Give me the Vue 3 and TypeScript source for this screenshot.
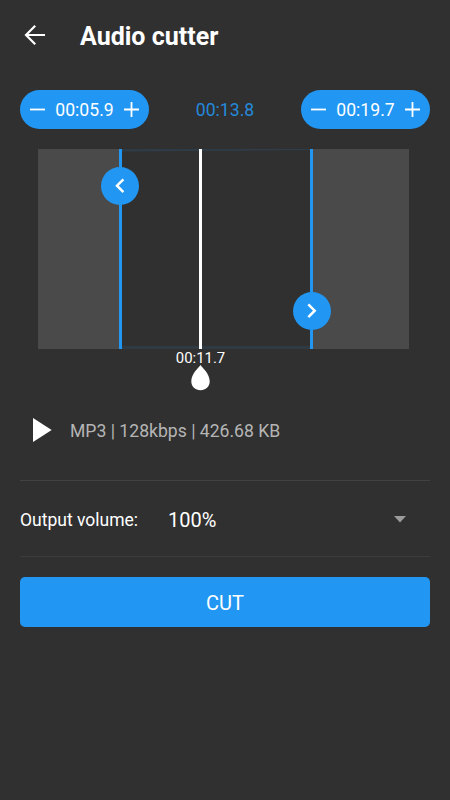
<script setup lang="ts">
import { computed, ref } from 'vue'

const start = ref(5.9)
const end = ref(19.7)
const position = ref(11.7)
const volume = ref('100%')

const format = (value: number): string => {
  const minutes = Math.floor(value / 60)
  const seconds = (value % 60).toFixed(1).padStart(4, '0')
  return `${String(minutes).padStart(2, '0')}:${seconds}`
}

const duration = computed(() => format(end.value - start.value))

const shift = (edge: 'start' | 'end', delta: number): void => {
  if (edge === 'start') start.value = Math.max(0, start.value + delta)
  else end.value = Math.max(start.value, end.value + delta)
}
</script>

<template>
  <main class="screen">
    <header class="toolbar">
      <button class="icon-button" aria-label="Back">
        <svg width="22" height="24" viewBox="0 0 22 24" fill="none" stroke="#fff" stroke-width="2.2">
          <path d="M21 11H2.600M11.200 1.700 2 11l9.200 9.300" />
        </svg>
      </button>
      <h1 class="title">Audio cutter</h1>
    </header>

    <section class="times">
      <div class="stepper">
        <button class="step" aria-label="Start earlier" @click="shift('start', -0.1)">
          <svg width="15" height="16" viewBox="0 0 15 16"><path d="M0 7.5h15" /></svg>
        </button>
        <span class="value">{{ format(start) }}</span>
        <button class="step" aria-label="Start later" @click="shift('start', 0.1)">
          <svg width="15" height="16" viewBox="0 0 15 16"><path d="M0 7.5h15M7.5 0v15" /></svg>
        </button>
      </div>
      <span class="duration">{{ duration }}</span>
      <div class="stepper">
        <button class="step" aria-label="End earlier" @click="shift('end', -0.1)">
          <svg width="15" height="16" viewBox="0 0 15 16"><path d="M0 7.5h15" /></svg>
        </button>
        <span class="value">{{ format(end) }}</span>
        <button class="step" aria-label="End later" @click="shift('end', 0.1)">
          <svg width="15" height="16" viewBox="0 0 15 16"><path d="M0 7.5h15M7.5 0v15" /></svg>
        </button>
      </div>
    </section>

    <section class="wave">
      <div class="outside"></div>
      <div class="selection">
        <svg class="trace" width="192" height="3" viewBox="0 0 192 3">
          <path d="M0 .3 192 0v1L0 2.400Z" fill="#2e3d49" />
        </svg>
      </div>
      <div class="outside"></div>
      <div class="edge edge-start">
        <span class="handle">
          <svg width="10" height="16" viewBox="0 0 10 16"><path d="M8.400 1.300 2 7.700l6.400 6.400" /></svg>
        </span>
      </div>
      <div class="edge edge-end">
        <span class="handle">
          <svg width="10" height="16" viewBox="0 0 10 16"><path d="m1.300 1.300 6.400 6.400-6.400 6.400" /></svg>
        </span>
      </div>
      <div class="playhead">
        <span class="needle"></span>
        <span class="position">{{ format(position) }}</span>
        <svg class="drop" width="19" height="26" viewBox="0 0 19 26">
          <path d="M9.500 0C7.500 3 .3 8.500.3 16.300c0 5.500 4 8.900 9.200 8.900s9.200-3.400 9.200-8.900C18.700 8.500 11.500 3 9.500 0Z" fill="#fff" />
        </svg>
      </div>
    </section>

    <section class="file">
      <button class="icon-button" aria-label="Play">
        <svg width="19" height="24" viewBox="0 0 19 24"><path d="M0 0v24l18.700-12Z" fill="#fff" /></svg>
      </button>
      <span class="details">MP3 | 128kbps | 426.68 KB</span>
    </section>

    <section class="volume">
      <span class="label">Output volume:</span>
      <span class="amount">{{ volume }}</span>
      <svg class="caret" width="12" height="7" viewBox="0 0 12 7"><path d="M0 0h12L6 6.500Z" fill="#9b9b9b" /></svg>
    </section>

    <button class="cut">CUT</button>
  </main>
</template>

<style>
body {
  margin: 0;
  background: #303030;
}
</style>

<style scoped>
.screen {
  box-sizing: border-box;
  width: 450px;
  height: 800px;
  padding: 0 20px;
  background: #303030;
  color: #fff;
  font-family: Roboto, sans-serif;
}

button {
  padding: 0;
  border: 0;
  background: none;
  color: inherit;
  font: inherit;
}

svg {
  display: block;
}

.toolbar {
  display: flex;
  align-items: center;
  height: 72px;
  padding: 0 4px;
  margin-bottom: 18px;
}

.title {
  margin: 0 0 0 34px;
  padding-top: 2px;
  font-size: 25px;
  font-weight: 700;
  line-height: 30px;
}

.times {
  display: flex;
  align-items: center;
  justify-content: space-between;
  height: 39px;
}

.stepper {
  box-sizing: border-box;
  display: flex;
  align-items: center;
  justify-content: space-between;
  width: 129px;
  height: 39px;
  padding: 0 10px;
  border-radius: 20px;
  background: #2196f3;
}

.step svg {
  fill: none;
  stroke: #fff;
  stroke-width: 1.8;
}

.value,
.duration {
  font-size: 17.6px;
  line-height: 22px;
}

.duration {
  color: #2489dc;
}

.wave {
  position: relative;
  display: grid;
  grid-template-columns: 82px 192px 97px;
  width: 371px;
  height: 200px;
  margin: 20px 0 0 18px;
}

.outside {
  background: #4a4a4a;
}

.selection {
  box-sizing: border-box;
  border-bottom: 3px solid #2f3a43;
}

.edge {
  position: absolute;
  top: 0;
  width: 3px;
  height: 200px;
  background: #2196f3;
}

.edge-start {
  left: 80.5px;
}

.edge-end {
  left: 272px;
}

.handle {
  position: absolute;
  left: -17.5px;
  display: flex;
  align-items: center;
  justify-content: center;
  width: 38px;
  height: 38px;
  border-radius: 50%;
  background: #2196f3;
}

.handle path {
  fill: none;
  stroke: #fff;
  stroke-width: 2.5;
}

.edge-start .handle {
  top: 18px;
}

.edge-end .handle {
  top: 143px;
}

.playhead {
  position: absolute;
  top: 0;
  left: 122.5px;
  display: flex;
  flex-direction: column;
  align-items: center;
  width: 80px;
}

.needle {
  width: 3px;
  height: 200px;
  background: #fff;
}

.position {
  height: 16px;
  font-size: 14.9px;
  line-height: 18px;
}

.file {
  display: flex;
  align-items: center;
  height: 40px;
  margin-top: 61px;
  padding-left: 13px;
}

.details {
  margin-left: 18px;
  padding-top: 2px;
  color: #b5b5b5;
  font-size: 17.6px;
  line-height: 24px;
}

.volume {
  box-sizing: border-box;
  display: flex;
  align-items: center;
  height: 77px;
  margin-top: 30px;
  border-top: 1px solid #424242;
  border-bottom: 1px solid #3c3c3c;
}

.label {
  width: 148px;
  padding-top: 2px;
  font-size: 17.5px;
}

.amount {
  padding-top: 2px;
  font-size: 20px;
}

.caret {
  margin: 1px 24px 0 auto;
}

.cut {
  display: block;
  width: 410px;
  height: 50px;
  margin-top: 20px;
  padding-top: 2px;
  border-radius: 5px;
  background: #2196f3;
  font-size: 20px;
}
</style>
